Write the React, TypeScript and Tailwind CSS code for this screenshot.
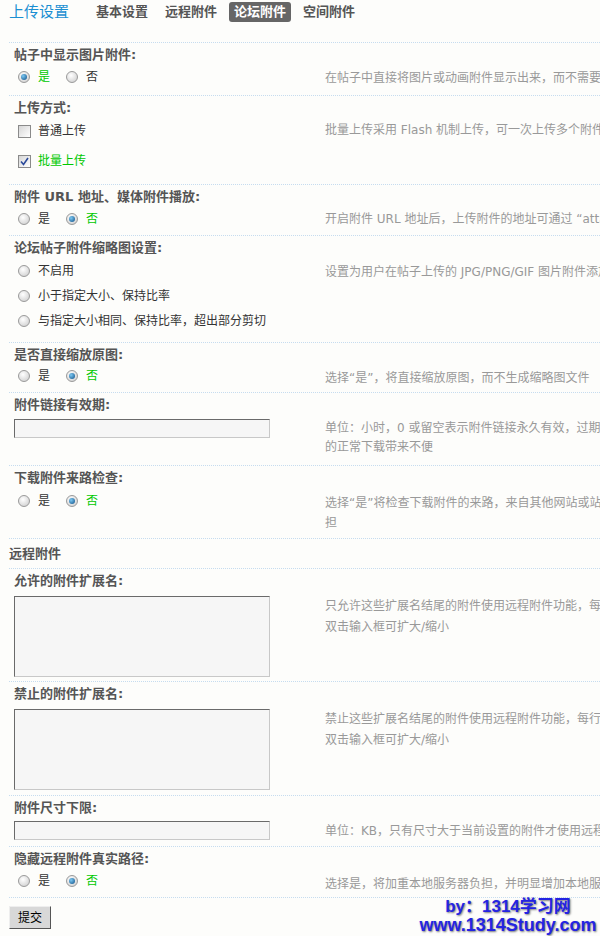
import type { ReactNode } from "react"

function Radio({ checked }: { checked?: boolean }) {
  return (
    <span className="inline-flex h-[12px] w-[12px] shrink-0 items-center justify-center rounded-full border border-[#9a9a9a] bg-[radial-gradient(circle_at_40%_35%,#ffffff,#c9c9c9)]">
      {checked && (
        <span className="h-[6px] w-[6px] rounded-full bg-[radial-gradient(circle_at_35%_35%,#7cc8f2,#0d4e86)]" />
      )}
    </span>
  )
}

function Checkbox({ checked }: { checked?: boolean }) {
  return (
    <span className="inline-flex h-[13px] w-[13px] shrink-0 items-center justify-center border border-[#8a8a8a] bg-[linear-gradient(135deg,#d6d6d6,#ffffff)]">
      {checked && (
        <svg width="9" height="9" viewBox="0 0 9 9">
          <path d="M1 4.5 L3.5 7.5 L8 1" fill="none" stroke="#2b4a9a" strokeWidth="1.6" />
        </svg>
      )}
    </span>
  )
}

function YesNo({ yes }: { yes?: boolean }) {
  return (
    <div className="flex h-[20px] items-center pl-[9px]">
      <span className="flex items-center gap-[8px]">
        <Radio checked={yes} />
        <span className={yes ? "text-[#00c800]" : "text-[#333]"}>是</span>
      </span>
      <span className="ml-[16px] flex items-center gap-[8px]">
        <Radio checked={!yes} />
        <span className={!yes ? "text-[#00c800]" : "text-[#333]"}>否</span>
      </span>
    </div>
  )
}

function Field({ tall }: { tall?: boolean }) {
  return (
    <div
      className={`ml-[5px] w-[256px] border border-t-[#6a6a6a] border-l-[#6a6a6a] border-r-[#c8c8c8] border-b-[#c8c8c8] bg-[#f6f6f6] ${
        tall ? "h-[81px]" : "h-[19px]"
      }`}
    />
  )
}

function Setting({
  label,
  bodyClass,
  leftClass,
  descClass,
  desc,
  children,
}: {
  label: string
  bodyClass: string
  leftClass: string
  descClass: string
  desc: string[]
  children: ReactNode
}) {
  return (
    <div className="border-t border-dotted border-[#c6dcef]">
      <div className="flex h-[22px] items-center pl-[5px] pt-[1px] text-[13px] font-bold text-[#555]">
        {label}
      </div>
      <div className={`grid grid-cols-[316px_1fr] ${bodyClass}`}>
        <div className={leftClass}>{children}</div>
        <div className={`whitespace-nowrap text-[#999] ${descClass}`}>
          {desc.map((line) => (
            <div key={line}>{line}</div>
          ))}
        </div>
      </div>
    </div>
  )
}

export default function App() {
  return (
    <div className="relative h-[936px] w-[600px] overflow-hidden bg-[#fdfdfb] font-['DejaVu_Sans','Noto_Sans_CJK_SC',sans-serif] text-[12px] text-[#333]">
      {/* Header */}
      <div className="flex h-[42px] items-start pl-[9px] pt-[1px]">
        <div className="flex h-[22px] items-center">
          <span className="text-[15px] text-[#1b8fd2]">上传设置</span>
          <nav className="ml-[22px] flex items-center gap-[7px] text-[13px] font-bold text-[#555]">
            <span className="px-[5px] leading-[20px]">基本设置</span>
            <span className="px-[5px] leading-[20px]">远程附件</span>
            <span className="rounded-[3px] bg-[#666] px-[5px] leading-[20px] text-white">论坛附件</span>
            <span className="px-[5px] leading-[20px]">空间附件</span>
          </nav>
        </div>
      </div>

      <div className="pl-[9px]">
        <Setting
          label="帖子中显示图片附件:"
          bodyClass="h-[30px]"
          leftClass="pt-[2px]"
          descClass="pt-[3px] leading-[20px]"
          desc={["在帖子中直接将图片或动画附件显示出来，而不需要点击附件链接"]}
        >
          <YesNo yes />
        </Setting>

        <Setting
          label="上传方式:"
          bodyClass="h-[66px]"
          leftClass="pt-[3px] pl-[9px]"
          descClass="pt-[2px] leading-[20px]"
          desc={["批量上传采用 Flash 机制上传，可一次上传多个附件"]}
        >
          <div className="flex h-[20px] items-center gap-[7px]">
            <Checkbox />
            <span>普通上传</span>
          </div>
          <div className="mt-[10px] flex h-[20px] items-center gap-[7px]">
            <Checkbox checked />
            <span className="text-[#00c800]">批量上传</span>
          </div>
        </Setting>

        <Setting
          label="附件 URL 地址、媒体附件播放:"
          bodyClass="h-[28px]"
          leftClass="pt-[2px]"
          descClass="pt-[2px] leading-[20px]"
          desc={["开启附件 URL 地址后，上传附件的地址可通过 “attachment.php” 直接访问"]}
        >
          <YesNo />
        </Setting>

        <Setting
          label="论坛帖子附件缩略图设置:"
          bodyClass="h-[84px]"
          leftClass="pt-[3px] pl-[9px]"
          descClass="pt-[4px] leading-[20px]"
          desc={["设置为用户在帖子上传的 JPG/PNG/GIF 图片附件添加缩略图"]}
        >
          <div className="flex h-[20px] items-center gap-[8px]">
            <Radio />
            <span>不启用</span>
          </div>
          <div className="mt-[5px] flex h-[20px] items-center gap-[8px]">
            <Radio />
            <span>小于指定大小、保持比率</span>
          </div>
          <div className="mt-[5px] flex h-[20px] items-center gap-[8px]">
            <Radio />
            <span>与指定大小相同、保持比率，超出部分剪切</span>
          </div>
        </Setting>

        <Setting
          label="是否直接缩放原图:"
          bodyClass="h-[27px]"
          leftClass="pt-[1px]"
          descClass="pt-[3px] leading-[20px]"
          desc={["选择“是”，将直接缩放原图，而不生成缩略图文件"]}
        >
          <YesNo />
        </Setting>

        <Setting
          label="附件链接有效期:"
          bodyClass="h-[50px]"
          leftClass="pt-[4px]"
          descClass="pt-[4px] leading-[19px]"
          desc={[
            "单位：小时，0 或留空表示附件链接永久有效，过期后附件将无法下载，会给用户",
            "的正常下载带来不便",
          ]}
        >
          <Field />
        </Setting>

        <Setting
          label="下载附件来路检查:"
          bodyClass="h-[50px]"
          leftClass="pt-[3px]"
          descClass="pt-[5px] leading-[20px]"
          desc={[
            "选择“是”将检查下载附件的来路，来自其他网站或站点的下载请求将被禁止，可减轻服务器负",
            "担",
          ]}
        >
          <YesNo />
        </Setting>

        {/* Remote section */}
        <div className="flex h-[30px] items-center border-t border-dotted border-[#c6dcef] pt-[1px] text-[13px] font-bold text-[#555]">
          远程附件
        </div>

        <Setting
          label="允许的附件扩展名:"
          bodyClass="h-[90px]"
          leftClass="pt-[5px]"
          descClass="pt-[5px] leading-[21px]"
          desc={[
            "只允许这些扩展名结尾的附件使用远程附件功能，每行一个，不区分大小写，留空为不限制",
            "双击输入框可扩大/缩小",
          ]}
        >
          <Field tall />
        </Setting>

        <Setting
          label="禁止的附件扩展名:"
          bodyClass="h-[91px]"
          leftClass="pt-[5px]"
          descClass="pt-[5px] leading-[21px]"
          desc={[
            "禁止这些扩展名结尾的附件使用远程附件功能，每行一个，不区分大小写，留空为不限制",
            "双击输入框可扩大/缩小 ",
          ]}
        >
          <Field tall />
        </Setting>

        <Setting
          label="附件尺寸下限:"
          bodyClass="h-[28px]"
          leftClass="pt-[3px]"
          descClass="pt-[3px] leading-[20px]"
          desc={["单位：KB，只有尺寸大于当前设置的附件才使用远程附件功能，0 或留空为不限制"]}
        >
          <Field />
        </Setting>

        <Setting
          label="隐藏远程附件真实路径:"
          bodyClass="h-[28px]"
          leftClass="pt-[2px]"
          descClass="pt-[5px] leading-[20px]"
          desc={["选择是，将加重本地服务器负担，并明显增加本地服务器流量"]}
        >
          <YesNo />
        </Setting>

        <div className="border-t border-dotted border-[#c6dcef] pt-[8px]">
          <button className="h-[23px] w-[42px] border border-t-[#eeeeee] border-l-[#eeeeee] border-r-[#555] border-b-[#555] bg-[#d8d8d8] text-[12px] text-black">
            提交
          </button>
        </div>
      </div>

      {/* Watermark */}
      <div className="absolute left-[418px] top-[897px] w-[180px] text-center font-['Liberation_Sans','Noto_Sans_CJK_SC',sans-serif] font-bold leading-[19px] text-[#2424e2] [text-shadow:1px_1px_2px_#7a7a7a]">
        <div className="text-[17px]">by：1314学习网</div>
        <div className="text-[18px]">www.1314Study.com</div>
      </div>
    </div>
  )
}
